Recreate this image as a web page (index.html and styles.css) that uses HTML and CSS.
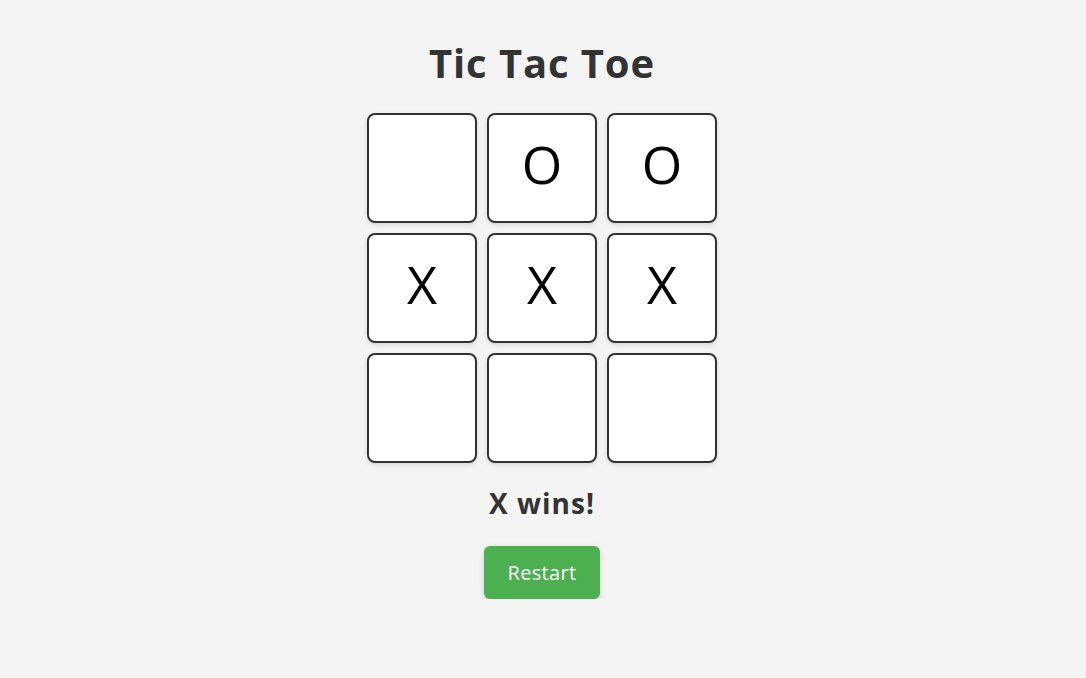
FILE: index.html
```html
<!DOCTYPE html>
<html lang="en">
<head>
<meta charset="utf-8">
<title>Tic Tac Toe</title>
<link rel="stylesheet" href="styles.css">
</head>
<body>
  <main class="game">
    <h1 class="title">Tic Tac Toe</h1>
    <div class="board">
      <button class="cell"></button>
      <button class="cell">O</button>
      <button class="cell">O</button>
      <button class="cell">X</button>
      <button class="cell">X</button>
      <button class="cell">X</button>
      <button class="cell"></button>
      <button class="cell"></button>
      <button class="cell"></button>
    </div>
    <p class="status">X wins!</p>
    <button class="restart">Restart</button>
  </main>
</body>
</html>
```

FILE: styles.css
```css
html, body {
  margin: 0;
  padding: 0;
}
body {
  background: #f4f4f4;
  font-family: "Open Sans", "Liberation Sans", sans-serif;
  color: #333;
}
.game {
  display: flex;
  flex-direction: column;
  align-items: center;
  padding-top: 36px;
  padding-right: 2px;
}
.title {
  margin: 0;
  font-size: 40px;
  line-height: 54px;
  font-weight: 700;
  letter-spacing: 0.9px;
  color: #333;
}
.board {
  margin-top: 23px;
  display: grid;
  grid-template-columns: repeat(3, 110px);
  grid-template-rows: repeat(3, 110px);
  gap: 10px;
}
.cell {
  width: 110px;
  height: 110px;
  box-sizing: border-box;
  border: 2px solid #333;
  border-radius: 8px;
  background: #fff;
  box-shadow: 0 2px 5px rgba(0,0,0,0.12);
  font-family: "Open Sans", "Liberation Sans", sans-serif;
  font-size: 52px;
  font-weight: 400;
  color: #000;
  display: flex;
  align-items: center;
  justify-content: center;
  padding: 0 0 9px;
}
.status {
  margin: 22px 0 0;
  font-size: 28px;
  line-height: 36px;
  font-weight: 700;
  letter-spacing: 1px;
  color: #333;
}
.restart {
  margin-top: 25px;
  width: 116px;
  height: 53px;
  border: none;
  border-radius: 6px;
  background: #4caf50;
  color: #fff;
  font-family: "Open Sans", "Liberation Sans", sans-serif;
  font-size: 20px;
  letter-spacing: 0.3px;
  box-shadow: 0 2px 6px rgba(0,0,0,0.15);
  padding: 0;
}
```
